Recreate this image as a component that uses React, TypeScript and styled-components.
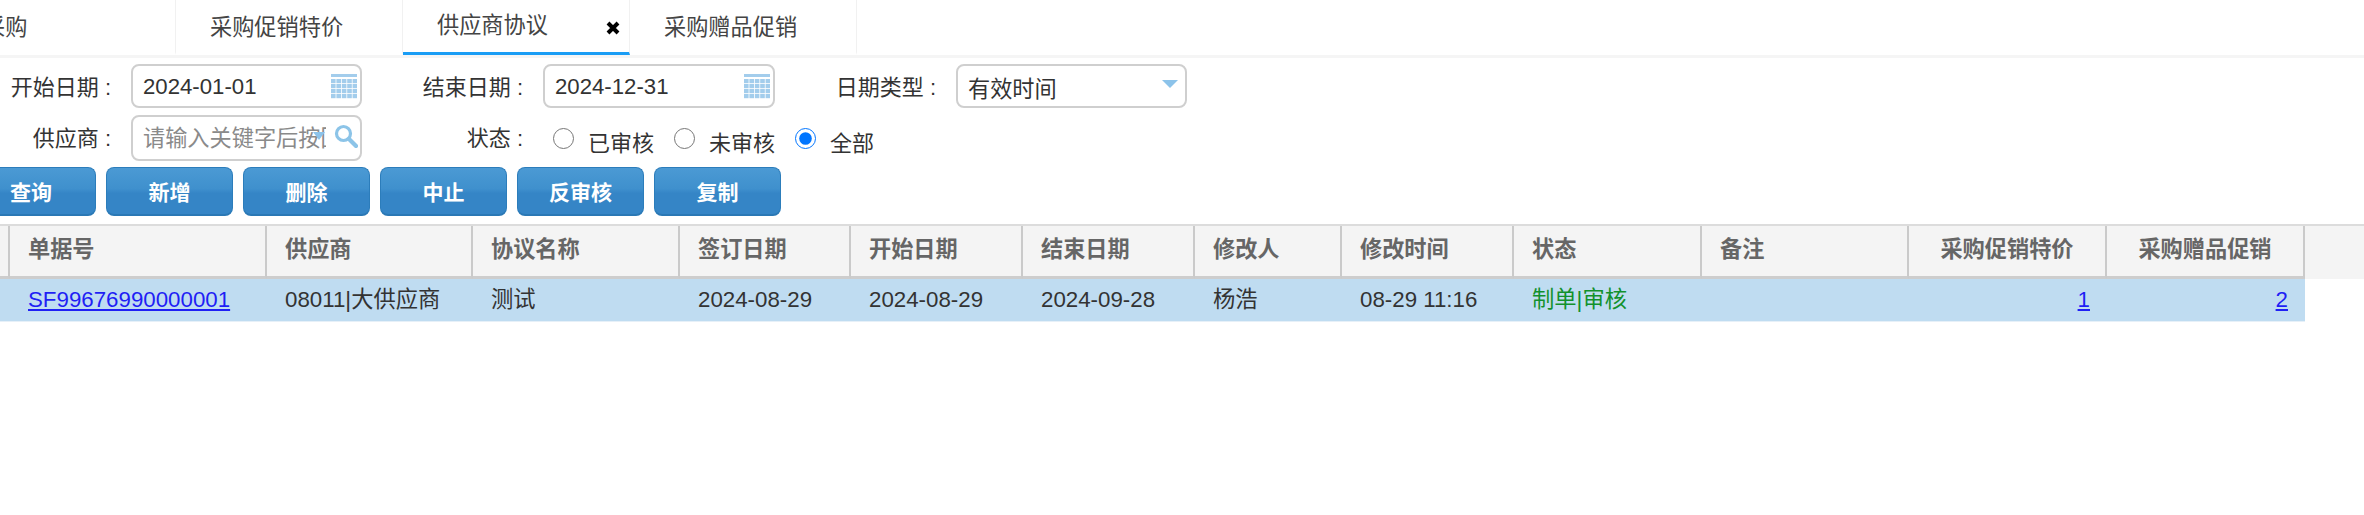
import React from "react";
import styled, { createGlobalStyle } from "styled-components";

const GlobalStyle = createGlobalStyle`
    html, body {
        margin: 0;
        padding: 0;
        background: #fff;
        overflow: hidden;
    }
    body {
        font-family: "Liberation Sans", "Noto Sans CJK SC", sans-serif;
        color: #333;
    }
`;

const Page = styled.div`
    width: 2364px;
    height: 515px;
    overflow: hidden;
    background: #fff;
`;

const TabBar = styled.div`
    display: flex;
    height: 55px;
    margin-left: -51px;
    border-bottom: 3px solid #f5f5f5;
`;

const Tab = styled.div<{ $active?: boolean }>`
    box-sizing: border-box;
    width: 227px;
    height: 55px;
    display: flex;
    align-items: center;
    justify-content: space-between;
    padding: ${(p) => (p.$active ? "0 9px 7px 34px" : "0 10px 3px 34px")};
    font-size: 22.2px;
    color: #444;
    border-right: 1px solid #f1f1f1;
    border-bottom: 3px solid ${(p) => (p.$active ? "#1a9df5" : "transparent")};
`;

const CloseMark = styled.svg`
    width: 14px;
    height: 14px;
    margin-top: 11px;
`;

const Form = styled.div`
    display: grid;
    grid-template-columns: 131px 231px 181px 232px 181px 231px;
    grid-template-rows: 44px 46px;
    row-gap: 7px;
    margin-top: 6px;
`;

const FieldLabel = styled.div`
    padding-right: 20px;
    font-size: 22px;
    color: #333;
    text-align: right;
    line-height: 47px;
    white-space: nowrap;
`;

const Box = styled.div`
    position: relative;
    box-sizing: border-box;
    display: flex;
    align-items: center;
    padding-left: 10px;
    border: 2px solid #cfcfcf;
    border-radius: 8px;
    background: #fff;
`;

const BoxInput = styled.input`
    flex: 1;
    min-width: 0;
    height: 100%;
    padding: 2px 0 0;
    box-sizing: border-box;
    border: 0;
    outline: 0;
    background: transparent;
    font: 22.2px "Liberation Sans", "Noto Sans CJK SC", sans-serif;
    color: #333;
    &::placeholder {
        color: #8a8a8a;
        opacity: 1;
    }
`;

const BoxIcon = styled.svg`
    flex: none;
    margin-right: 3px;
`;

const SearchIcon = styled.svg`
    flex: none;
    margin: 0 2px 4px 8px;
`;

const FilterArrow = styled.span`
    position: absolute;
    left: 180px;
    top: 15px;
    width: 0;
    height: 0;
    border-left: 6px solid transparent;
    border-right: 6px solid transparent;
    border-top: 8px solid #8cc3ea;
`;

const SelectArrow = styled.span`
    flex: none;
    width: 0;
    height: 0;
    margin: 0 7px 4px 0;
    border-left: 8px solid transparent;
    border-right: 8px solid transparent;
    border-top: 8px solid #8cc3ea;
`;

const RadioGroup = styled.div`
    grid-column: 4 / 7;
    display: flex;
    align-items: center;
    margin: 0 0 0 10px;
    padding-top: 6px;
`;

const RadioItem = styled.label`
    display: flex;
    align-items: center;
    margin-right: 20px;
    font-size: 22px;
    color: #333;
`;

const Radio = styled.input`
    width: 21px;
    height: 21px;
    margin: 0 14px 5px 0;
`;

const Toolbar = styled.div`
    display: flex;
    gap: 10px;
    margin: 6px 0 0 -34px;
`;

const ActionButton = styled.button`
    box-sizing: border-box;
    width: 127px;
    height: 49px;
    padding: 0;
    border: 1px solid #2c7dbb;
    border-bottom: 2px solid #2a78b5;
    border-radius: 8px;
    background: linear-gradient(#4b9ad4 0%, #3f90cd 45%, #3585c6 55%, #3585c6 100%);
    color: #fff;
    font: bold 21px "Liberation Sans", "Noto Sans CJK SC", sans-serif;
    &:first-child {
        width: 130px;
    }
`;

const Grid = styled.div`
    margin-top: 8px;
`;

const columns = "10px 257px 206px 207px 171px 172px 172px 147px 172px 188px 207px 198px 198px 1fr";

const HeaderRow = styled.div`
    box-sizing: border-box;
    display: grid;
    grid-template-columns: ${columns};
    height: 55px;
    border-top: 2px solid #dcdcdc;
    background: #f4f4f4;
`;

const HeaderCell = styled.div<{ $center?: boolean }>`
    box-sizing: border-box;
    padding: 0 ${(p) => (p.$center ? "0" : "18px")};
    border-right: 2px solid #cacaca;
    border-bottom: 3px solid #cdcdcd;
    font-size: 22.2px;
    font-weight: bold;
    color: #666;
    line-height: 48px;
    text-align: ${(p) => (p.$center ? "center" : "left")};
    &:empty {
        padding: 0;
    }
    &:last-child {
        border: 0;
    }
`;

const DataRow = styled.div`
    display: grid;
    grid-template-columns: ${columns};
    height: 43px;
`;

const DataCell = styled.div<{ $right?: boolean; $blank?: boolean }>`
    box-sizing: border-box;
    padding: 0 ${(p) => (p.$right ? "17px" : "18px")};
    background: ${(p) => (p.$blank ? "#fff" : "#bfdcf1")};
    border-bottom: 1px solid ${(p) => (p.$blank ? "#fff" : "#e6f0f8")};
    font-size: 22.3px;
    color: #333;
    line-height: 42px;
    white-space: nowrap;
    text-align: ${(p) => (p.$right ? "right" : "left")};
    &:empty {
        padding: 0;
    }
`;

const DocLink = styled.a`
    color: #1f1ff5;
    text-decoration: underline;
`;

const StatusText = styled.span`
    color: #12912c;
`;

const CalendarIcon: React.FC = () => {
    const cells: React.ReactNode[] = [];
    for (let r = 0; r < 4; r++) {
        for (let c = 0; c < 5; c++) {
            cells.push(<rect key={`${r}-${c}`} x={c * 5.4} y={5 + r * 5} width={4.6} height={4.2} />);
        }
    }
    return (
        <BoxIcon width="26" height="25" viewBox="0 0 26 25" fill="#a3cdec">
            <rect x="0" y="0" width="26" height="3" />
            {cells}
        </BoxIcon>
    );
};

const TABS = ["采购", "采购促销特价", "供应商协议", "采购赠品促销"];
const BUTTONS = ["查询", "新增", "删除", "中止", "反审核", "复制"];
const HEADERS = ["单据号", "供应商", "协议名称", "签订日期", "开始日期", "结束日期", "修改人", "修改时间", "状态", "备注"];

const App: React.FC = () => {
    return (
        <Page>
            <GlobalStyle />
            <TabBar>
                {TABS.map((t, i) => (
                    <Tab key={t} $active={i === 2}>
                        {t}
                        {i === 2 && (
                            <CloseMark viewBox="0 0 14 14">
                                <path d="M2 2 L12 12 M12 2 L2 12" stroke="#000" strokeWidth="4" />
                            </CloseMark>
                        )}
                    </Tab>
                ))}
            </TabBar>
            <Form>
                <FieldLabel>开始日期 :</FieldLabel>
                <Box>
                    <BoxInput readOnly value="2024-01-01" />
                    <CalendarIcon />
                </Box>
                <FieldLabel>结束日期 :</FieldLabel>
                <Box>
                    <BoxInput readOnly value="2024-12-31" />
                    <CalendarIcon />
                </Box>
                <FieldLabel>日期类型 :</FieldLabel>
                <Box>
                    <BoxInput readOnly value="有效时间" />
                    <SelectArrow />
                </Box>
                <FieldLabel>供应商 :</FieldLabel>
                <Box>
                    <BoxInput placeholder="请输入关键字后按回车" />
                    <FilterArrow />
                    <SearchIcon width="24" height="24" viewBox="0 0 24 24" fill="none" stroke="#8cc4e8">
                        <circle cx="9.5" cy="9.5" r="7" strokeWidth="3.2" />
                        <path d="M15 15 L22 22" strokeWidth="4.2" strokeLinecap="round" />
                    </SearchIcon>
                </Box>
                <FieldLabel>状态 :</FieldLabel>
                <RadioGroup>
                    <RadioItem>
                        <Radio type="radio" name="status" />
                        已审核
                    </RadioItem>
                    <RadioItem>
                        <Radio type="radio" name="status" />
                        未审核
                    </RadioItem>
                    <RadioItem>
                        <Radio type="radio" name="status" defaultChecked />
                        全部
                    </RadioItem>
                </RadioGroup>
            </Form>
            <Toolbar>
                {BUTTONS.map((b) => (
                    <ActionButton key={b}>{b}</ActionButton>
                ))}
            </Toolbar>
            <Grid>
                <HeaderRow>
                    <HeaderCell />
                    {HEADERS.map((h) => (
                        <HeaderCell key={h}>{h}</HeaderCell>
                    ))}
                    <HeaderCell $center>采购促销特价</HeaderCell>
                    <HeaderCell $center>采购赠品促销</HeaderCell>
                    <HeaderCell />
                </HeaderRow>
                <DataRow>
                    <DataCell />
                    <DataCell>
                        <DocLink href="#">SF99676990000001</DocLink>
                    </DataCell>
                    <DataCell>08011|大供应商</DataCell>
                    <DataCell>测试</DataCell>
                    <DataCell>2024-08-29</DataCell>
                    <DataCell>2024-08-29</DataCell>
                    <DataCell>2024-09-28</DataCell>
                    <DataCell>杨浩</DataCell>
                    <DataCell>08-29 11:16</DataCell>
                    <DataCell>
                        <StatusText>制单|审核</StatusText>
                    </DataCell>
                    <DataCell />
                    <DataCell $right>
                        <DocLink href="#">1</DocLink>
                    </DataCell>
                    <DataCell $right>
                        <DocLink href="#">2</DocLink>
                    </DataCell>
                    <DataCell $blank />
                </DataRow>
            </Grid>
        </Page>
    );
};

export default App;
